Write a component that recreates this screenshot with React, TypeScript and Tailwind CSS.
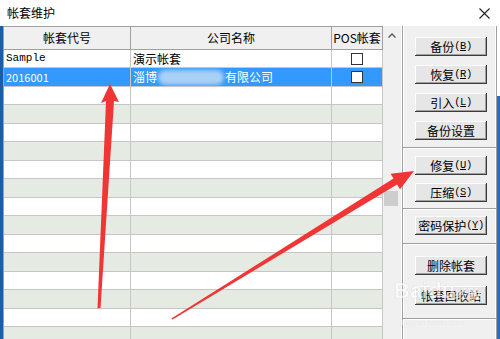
import React from 'react';

const cjk = { fontFamily: '"Noto Sans CJK SC", "Noto Sans", sans-serif' };
const mono = { fontFamily: '"Liberation Mono", "DejaVu Sans Mono", monospace' };

const rowCount = 17;

function Checkbox() {
    return <div className="h-[12px] w-[12px] border-[1.5px] border-[#333] bg-white" />;
}

function Btn({ label, hot, mt }: { label: string; hot?: string; mt: string }) {
    return (
        <div
            className={`${mt} ml-[12px] flex h-[19px] w-[72px] items-center justify-center bg-[#e6e6e6] text-[12px] leading-none text-black shadow-[inset_-1px_-1px_#3c3c3c,inset_1px_1px_#ffffff,inset_-2px_-2px_#a0a0a0]`}
        >
            <span>{label}</span>
            {hot && (
                <span className="text-[10.5px] tracking-[-0.5px]" style={mono}>
                    (<span className="underline">{hot}</span>)
                </span>
            )}
        </div>
    );
}

function Sep({ mt }: { mt: string }) {
    return <div className={`${mt} h-[2px] w-full border-t border-b border-t-[#a0a0a0] border-b-white`} />;
}

export default function App() {
    const rows = Array.from({ length: rowCount }, (_, i) => i);

    return (
        <div className="relative h-[339px] w-[500px] overflow-hidden bg-white" style={cjk}>
            {/* title bar */}
            <div className="flex h-[26px] items-center justify-between pl-[7px] pr-[10px] text-[12px] text-black">
                <span>帐套维护</span>
                <svg width="11" height="11" viewBox="0 0 11 11">
                    <path d="M0.5 0.5 L10.5 10.5 M10.5 0.5 L0.5 10.5" stroke="#222" strokeWidth="1.1" />
                </svg>
            </div>

            <div className="flex h-[313px]">
                <div className="w-[3px] bg-[#1f5ca6]" />

                {/* table */}
                <div className="w-[380px] overflow-hidden border-t border-l border-[#a0a0a0] text-[12px]">
                    <div className="grid h-[22.5px] grid-cols-[127px_201px_51px] border-b border-[#a0a0a0] bg-[#f0f0f0] text-black">
                        <div className="flex items-center justify-center border-r border-[#a0a0a0]">帐套代号</div>
                        <div className="flex items-center justify-center border-r border-[#a0a0a0]">公司名称</div>
                        <div className="flex items-center justify-center border-r border-[#a0a0a0]">POS帐套</div>
                    </div>
                    {rows.map((i) => {
                        const selected = i === 1;
                        const bg = selected ? 'bg-[#3399ff] text-white' : i % 2 === 1 ? 'bg-[#e5ebe2] text-black' : 'bg-white text-black';
                        return (
                            <div key={i} className={`grid h-[18.5px] grid-cols-[127px_201px_51px] border-b border-[#c6c6c6] ${bg}`}>
                                <div className="flex items-center border-r border-[#c6c6c6] pl-[2px]">
                                    {i === 0 && <span className="text-[11px]" style={mono}>Sample</span>}
                                    {i === 1 && <span className="text-[11px]">2016001</span>}
                                </div>
                                <div className="flex items-center border-r border-[#c6c6c6] pl-[2px]">
                                    {i === 0 && <span>演示帐套</span>}
                                    {i === 1 && (
                                        <>
                                            <span>淄博</span>
                                            <span className="mx-[1px] inline-block h-[15px] w-[66px] rounded-full bg-[#a9d1f6] blur-[2px]" />
                                            <span>有限公司</span>
                                        </>
                                    )}
                                </div>
                                <div className="flex items-center justify-center border-r border-[#c6c6c6]">
                                    {i < 2 && <Checkbox />}
                                </div>
                            </div>
                        );
                    })}
                </div>

                {/* scrollbar */}
                <div className="flex w-[18px] flex-col bg-[#f0f0f0]">
                    <div className="flex h-[17px] items-center justify-center pt-[2px]">
                        <svg width="8" height="5" viewBox="0 0 8 5">
                            <path d="M0.5 4.5 L4 1 L7.5 4.5" stroke="#555" strokeWidth="1.3" fill="none" />
                        </svg>
                    </div>
                    <div className="mt-[148px] ml-[1px] h-[15px] w-[14px] bg-[#cdcdcd]" />
                </div>

                {/* button panel */}
                <div className="ml-[1px] flex w-[95px] flex-col border-l border-r border-l-[#a0a0a0] border-r-[#a0a0a0] bg-[#f0f0f0] shadow-[inset_1px_0_#ffffff,inset_-1px_0_#ffffff]">
                    <Btn label="备份" hot="B" mt="mt-[11px]" />
                    <Btn label="恢复" hot="R" mt="mt-[9px]" />
                    <Btn label="引入" hot="L" mt="mt-[9px]" />
                    <Btn label="备份设置" mt="mt-[9px]" />
                    <Sep mt="mt-[7px]" />
                    <Btn label="修复" hot="U" mt="mt-[7px]" />
                    <Btn label="压缩" hot="S" mt="mt-[8px]" />
                    <Sep mt="mt-[6px]" />
                    <Btn label="密码保护" hot="Y" mt="mt-[6px]" />
                    <Sep mt="mt-[8px]" />
                    <Btn label="删除帐套" mt="mt-[11px]" />
                    <Btn label="帐套回收站" mt="mt-[11px]" />
                    <Sep mt="mt-[13px]" />
                </div>

                <div className="flex flex-1 flex-col">
                    <div className="h-[70px] bg-white" />
                    <div className="ml-auto w-[3px] flex-1 bg-[#2a6fc2]" />
                </div>
            </div>

            {/* watermark */}
            <div
                className="pointer-events-none absolute left-[394px] top-[280px] text-[22px] font-bold leading-none text-white opacity-60 [text-shadow:0_0_1px_#9a9a9a]"
                style={{ fontFamily: '"Liberation Sans", sans-serif' }}
            >
                Baidu<span className="text-[13px]">经验</span>
            </div>
            <div
                className="pointer-events-none absolute left-[400px] top-[319px] text-[8px] leading-none text-[#e4e4e4] opacity-60"
                style={{ fontFamily: '"Liberation Sans", sans-serif' }}
            >
                jingyan.baidu.com
            </div>

            {/* red annotation arrows */}
            <svg className="pointer-events-none absolute left-0 top-0" width="500" height="339" viewBox="0 0 500 339">
                <polygon points="110,84 119,102 114,101 100.5,308 97.5,308.5 106,101 101,103" fill="#f03535" />
                <polygon points="414,171 400,189.2 397.1,184.5 172.6,319.6 171.4,318.4 393.5,178.5 390.6,173.8" fill="#f03535" />
            </svg>
        </div>
    );
}
